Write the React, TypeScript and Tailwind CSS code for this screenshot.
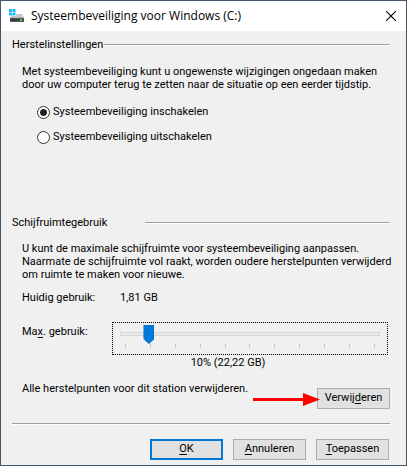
import { useState } from 'react';

const DISK_GB = 222.2;
const TICKS = Array.from({ length: 11 }, (_, i) => i);

const BUTTON = 'h-[21px] w-[73px] shrink-0 bg-[#e1e1e1] text-center';

function formatGb(n: number) {
  return `${n.toFixed(2).replace('.', ',')} GB`;
}

function SectionTitle({ label, gap }: { label: string; gap: string }) {
  return (
    <div className={`flex items-center ${gap}`}>
      <h2 className="leading-4">{label}</h2>
      <div className="h-[2px] flex-1 border-t border-[#a0a0a0] bg-white" />
    </div>
  );
}

function DriveIcon() {
  return (
    <svg width="16" height="14" viewBox="0 0 16 14" className="shrink-0">
      <path d="M4 5h9l2 4H1z" fill="#c6c8ca" />
      <path d="M1 8.5h14V9H1z" fill="#9a9c9e" />
      <path d="M1 9h14v4H1z" fill="#55585a" />
      <path d="M2 10h12v2H2z" fill="#3a3c3e" />
      <path d="M11 10h2v2h-2z" fill="#3fe04a" />
      <path d="M0 0h7v7H0z" fill="#fff" />
      <path d="M0 0h3v3H0zM3.5 0h3v3h-3zM0 3.5h3v3H0zM3.5 3.5h3v3h-3z" fill="#18bdf5" />
    </svg>
  );
}

function RadioOption({
  label,
  checked,
  onSelect,
}: {
  label: string;
  checked: boolean;
  onSelect: () => void;
}) {
  return (
    <label className="flex items-center gap-[3px]">
      <input
        type="radio"
        name="protection"
        checked={checked}
        onChange={onSelect}
        className="size-[13px] appearance-none rounded-full border border-[#333] bg-white bg-clip-padding checked:bg-[radial-gradient(circle,#222_0_3px,#fff_4px)]"
      />
      <span className="leading-4">{label}</span>
    </label>
  );
}

export default function App() {
  const [enabled, setEnabled] = useState(true);
  const [pct, setPct] = useState(10);

  return (
    <div className="flex min-h-screen w-full flex-col border border-[#44566b] bg-[#f0f0f0] font-[Roboto,sans-serif] text-[11px] text-black">
      <header className="flex h-[30px] items-center gap-[6px] bg-white pl-2 pr-[10px]">
        <DriveIcon />
        <h1 className="flex-1 font-['Open_Sans',sans-serif] text-[12px] leading-4">
          Systeembeveiliging voor Windows (C:)
        </h1>
        <button type="button" aria-label="Sluiten" className="flex size-[10px] items-center justify-center">
          <svg width="10" height="10" viewBox="0 0 10 10" stroke="#000" strokeWidth="1.1">
            <path d="M0 0l10 10M10 0L0 10" />
          </svg>
        </button>
      </header>

      <main className="flex flex-1 flex-col pb-[5px] pl-[11px] pr-4">
        <section className="pt-[6px]">
          <SectionTitle label="Herstelinstellingen" gap="gap-px" />
          <p className="mt-3 whitespace-nowrap pl-[10px] leading-[13px]">
            Met systeembeveiliging kunt u ongewenste wijzigingen ongedaan maken
            <br />
            door uw computer terug te zetten naar de situatie op een eerder tijdstip.
          </p>
          <div className="mt-[13px] flex flex-col gap-[9px] pl-[25px]">
            <RadioOption
              label="Systeembeveiliging inschakelen"
              checked={enabled}
              onSelect={() => setEnabled(true)}
            />
            <RadioOption
              label="Systeembeveiliging uitschakelen"
              checked={!enabled}
              onSelect={() => setEnabled(false)}
            />
          </div>
        </section>

        <section className="mt-[70px]">
          <SectionTitle label="Schijfruimtegebruik" gap="gap-[38px]" />
          <div className="pl-[10px]">
            <p className="mt-[11px] whitespace-nowrap leading-[13px]">
              U kunt de maximale schijfruimte voor systeembeveiliging aanpassen.
              <br />
              Naarmate de schijfruimte vol raakt, worden oudere herstelpunten verwijderd
              <br />
              om ruimte te maken voor nieuwe.
            </p>
            <dl className="mt-[9px] flex leading-4">
              <dt className="w-[98px]">Huidig gebruik:</dt>
              <dd>1,81 GB</dd>
            </dl>
            <div className="mt-4 flex">
              <label htmlFor="max-usage" className="w-[90px] pt-[2px] leading-4">
                Ma<u className="underline-offset-2">x</u>. gebruik:
              </label>
              <div className="mr-[2px] h-[33px] flex-1 border border-dotted border-black px-[7px] pt-px">
                <input
                  id="max-usage"
                  type="range"
                  min={1}
                  max={100}
                  value={pct}
                  onChange={(e) => setPct(Number(e.target.value))}
                  className="block h-5 w-full appearance-none bg-transparent outline-none [&::-webkit-slider-runnable-track]:h-1 [&::-webkit-slider-runnable-track]:border [&::-webkit-slider-runnable-track]:border-[#d6d6d6] [&::-webkit-slider-runnable-track]:bg-[#e7eaea] [&::-webkit-slider-thumb]:-mt-[8px] [&::-webkit-slider-thumb]:h-[19px] [&::-webkit-slider-thumb]:w-[11px] [&::-webkit-slider-thumb]:appearance-none [&::-webkit-slider-thumb]:bg-[#0078d7] [&::-webkit-slider-thumb]:[clip-path:polygon(0_0,100%_0,100%_74%,50%_100%,0_74%)]"
                />
                <div className="flex justify-between px-[5px]">
                  {TICKS.map((t) => (
                    <span key={t} className="h-1 w-px bg-[#c4c4c4]" />
                  ))}
                </div>
              </div>
            </div>
            <output htmlFor="max-usage" className="block pl-[44px] text-center leading-4">
              {pct}% ({formatGb((DISK_GB * pct) / 100)})
            </output>
          </div>
        </section>

        <div className="mt-[10px] flex items-start pl-[10px]">
          <p className="flex-1 leading-4">Alle herstelpunten voor dit station verwijderen.</p>
          <div className="relative mt-[7px]">
            <button type="button" className={`${BUTTON} border border-[#adadad]`}>
              Verwij<u className="underline-offset-2">d</u>eren
            </button>
            <svg width="67" height="13" viewBox="0 0 67 13" className="absolute -left-16 top-[5px]">
              <path d="M0 5h50V0l17 6.5L50 13V8H0z" fill="#f00" />
            </svg>
          </div>
        </div>

        <div className="mt-[14px] h-[2px] border-t border-[#a0a0a0] bg-white" />

        <footer className="mr-px mt-auto flex justify-end gap-[10px]">
          <button type="button" className={`${BUTTON} border-2 border-[#0078d7]`}>
            <u className="underline-offset-2">O</u>K
          </button>
          <button type="button" className={`${BUTTON} border border-[#adadad]`}>
            <u className="underline-offset-2">A</u>nnuleren
          </button>
          <button type="button" className={`${BUTTON} border border-[#adadad]`}>
            <u className="underline-offset-2">T</u>oepassen
          </button>
        </footer>
      </main>
    </div>
  );
}
